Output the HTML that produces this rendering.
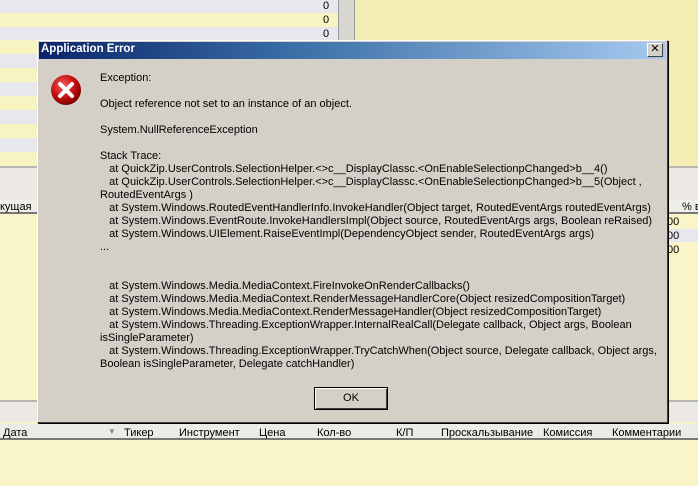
<!DOCTYPE html>
<html><head><meta charset="utf-8"><style>
*{margin:0;padding:0;box-sizing:border-box}
body{width:698px;height:486px;overflow:hidden;position:relative;background:#f9f5c9;font-family:"Liberation Sans","DejaVu Sans",sans-serif;font-size:11px;color:#000}
.a{position:absolute}
.t{position:absolute;white-space:nowrap;font-size:11px}
</style></head><body>
<!-- top-left grid -->
<div class="a" style="left:0;top:0;width:338px;height:13px;background:#e7e7ee"></div>
<div class="a" style="left:0;top:13px;width:338px;height:14px;background:#f8f4c2"></div>
<div class="a" style="left:0;top:27px;width:338px;height:13px;background:#e7e7ee"></div>
<div class="a" style="left:0;top:40px;width:338px;height:14px;background:#f8f4c2"></div>
<div class="a" style="left:0;top:54px;width:338px;height:14px;background:#e7e7ee"></div>
<div class="a" style="left:0;top:68px;width:338px;height:14px;background:#f8f4c2"></div>
<div class="a" style="left:0;top:82px;width:338px;height:14px;background:#e7e7ee"></div>
<div class="a" style="left:0;top:96px;width:338px;height:14px;background:#f8f4c2"></div>
<div class="a" style="left:0;top:110px;width:338px;height:14px;background:#e7e7ee"></div>
<div class="a" style="left:0;top:124px;width:338px;height:14px;background:#f8f4c2"></div>
<div class="a" style="left:0;top:138px;width:338px;height:14px;background:#e7e7ee"></div>
<div class="a" style="left:0;top:152px;width:338px;height:14px;background:#f8f4c2"></div>
<div class="t" style="left:323px;top:0">0</div>
<div class="t" style="left:323px;top:14px">0</div>
<div class="t" style="left:323px;top:28px">0</div>
<div class="a" style="left:338px;top:0;width:17px;height:166px;background:#d8d6d0;border-left:1px solid #999;border-right:1px solid #999"></div>
<div class="a" style="left:355px;top:0;width:343px;height:166px;background:#f3ecb3"></div>
<!-- middle tabs area -->
<div class="a" style="left:0;top:166px;width:698px;height:34px;background:#ece9e4;border-top:2px solid #b8b6b0"></div>
<div class="a" style="left:0;top:200px;width:698px;height:14px;background:#efeee8;border-bottom:2px solid #777"></div>
<div class="t" style="left:0;top:201px">кущая</div>
<div class="t" style="left:682px;top:201px">% в</div>
<div class="a" style="left:0;top:216px;width:698px;height:200px;background:#f9f5c9"></div>
<div class="a" style="left:666px;top:229px;width:32px;height:13px;background:#e7e7ee"></div>
<div class="t" style="left:667px;top:216px">00</div>
<div class="t" style="left:667px;top:230px">00</div>
<div class="t" style="left:667px;top:244px">00</div>
<div class="a" style="left:0;top:400px;width:698px;height:22px;background:#ece9e4;border-top:2px solid #b8b6b0"></div>
<!-- bottom header -->
<div class="a" style="left:0;top:424px;width:698px;height:16px;background:#ecebe6;border-bottom:2px solid #777"></div>
<div class="t" style="left:3px;top:427px">Дата</div>
<div class="t" style="left:108px;top:427px;color:#888;font-size:8px">▼</div>
<div class="t" style="left:124px;top:427px">Тикер</div>
<div class="t" style="left:179px;top:427px">Инструмент</div>
<div class="t" style="left:259px;top:427px">Цена</div>
<div class="t" style="left:317px;top:427px">Кол-во</div>
<div class="t" style="left:396px;top:427px">К/П</div>
<div class="t" style="left:441px;top:427px">Проскальзывание</div>
<div class="t" style="left:543px;top:427px">Комиссия</div>
<div class="t" style="left:612px;top:427px">Комментарии</div>
<!-- dialog -->
<div class="a" style="left:37px;top:40px;width:631px;height:383px;background:#d4d0c8;border:1px solid #fff;border-right-color:#404040;border-bottom-color:#404040;box-shadow:1px 1px 0 #000"></div>
<div class="a" style="left:39px;top:42px;width:627px;height:17px;background:linear-gradient(to right,#0a246a,#3a6ea5 40%,#a6caf0)"></div>
<div class="t" style="left:41px;top:43px;color:#fff;font-weight:bold;font-size:11.5px">Application Error</div>
<div class="a" style="left:647px;top:43px;width:16px;height:14px;background:#d4d0c8;border:1px solid #fff;border-right-color:#404040;border-bottom-color:#404040;text-align:center;font-size:11px;line-height:11px;font-weight:bold">✕</div>
<svg class="a" style="left:50px;top:74px" width="32" height="32" viewBox="0 0 32 32">
<defs><radialGradient id="g" cx="40%" cy="35%" r="65%"><stop offset="0" stop-color="#f06060"/><stop offset="0.6" stop-color="#c81010"/><stop offset="1" stop-color="#800000"/></radialGradient></defs>
<circle cx="16" cy="16" r="15" fill="url(#g)"/>
<path d="M10 10 L22 22 M22 10 L10 22" stroke="#fff" stroke-width="4" stroke-linecap="round"/>
</svg>
<div class="t" style="left:100px;top:72px">Exception:</div>
<div class="t" style="left:100px;top:98px">Object reference not set to an instance of an object.</div>
<div class="t" style="left:100px;top:124px">System.NullReferenceException</div>
<div class="t" style="left:100px;top:150px">Stack Trace:</div>
<div class="t" style="left:100px;top:163px">&nbsp;&nbsp;&nbsp;at QuickZip.UserControls.SelectionHelper.&lt;&gt;c__DisplayClassc.&lt;OnEnableSelectionpChanged&gt;b__4()</div>
<div class="t" style="left:100px;top:176px">&nbsp;&nbsp;&nbsp;at QuickZip.UserControls.SelectionHelper.&lt;&gt;c__DisplayClassc.&lt;OnEnableSelectionpChanged&gt;b__5(Object ,</div>
<div class="t" style="left:100px;top:189px">RoutedEventArgs )</div>
<div class="t" style="left:100px;top:202px">&nbsp;&nbsp;&nbsp;at System.Windows.RoutedEventHandlerInfo.InvokeHandler(Object target, RoutedEventArgs routedEventArgs)</div>
<div class="t" style="left:100px;top:215px">&nbsp;&nbsp;&nbsp;at System.Windows.EventRoute.InvokeHandlersImpl(Object source, RoutedEventArgs args, Boolean reRaised)</div>
<div class="t" style="left:100px;top:228px">&nbsp;&nbsp;&nbsp;at System.Windows.UIElement.RaiseEventImpl(DependencyObject sender, RoutedEventArgs args)</div>
<div class="t" style="left:100px;top:241px">...</div>
<div class="t" style="left:100px;top:280px">&nbsp;&nbsp;&nbsp;at System.Windows.Media.MediaContext.FireInvokeOnRenderCallbacks()</div>
<div class="t" style="left:100px;top:293px">&nbsp;&nbsp;&nbsp;at System.Windows.Media.MediaContext.RenderMessageHandlerCore(Object resizedCompositionTarget)</div>
<div class="t" style="left:100px;top:306px">&nbsp;&nbsp;&nbsp;at System.Windows.Media.MediaContext.RenderMessageHandler(Object resizedCompositionTarget)</div>
<div class="t" style="left:100px;top:319px">&nbsp;&nbsp;&nbsp;at System.Windows.Threading.ExceptionWrapper.InternalRealCall(Delegate callback, Object args, Boolean</div>
<div class="t" style="left:100px;top:332px">isSingleParameter)</div>
<div class="t" style="left:100px;top:345px">&nbsp;&nbsp;&nbsp;at System.Windows.Threading.ExceptionWrapper.TryCatchWhen(Object source, Delegate callback, Object args,</div>
<div class="t" style="left:100px;top:358px">Boolean isSingleParameter, Delegate catchHandler)</div>
<div class="a" style="left:314px;top:387px;width:74px;height:23px;background:#d4d0c8;border:1px solid #000;box-shadow:inset 1px 1px 0 #fff,inset -1px -1px 0 #404040;text-align:center;line-height:20px">OK</div>
</body></html>
